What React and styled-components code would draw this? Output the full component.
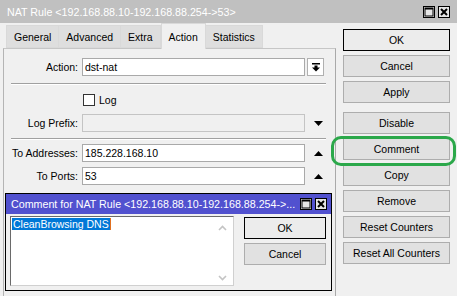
import React from "react";
import styled, { createGlobalStyle } from "styled-components";

const GlobalStyle = createGlobalStyle`
  html, body {
    margin: 0;
    padding: 0;
    background: #f0f0f0;
  }
  body {
    font-family: "Liberation Sans", Arial, sans-serif;
    font-size: 10.5px;
    color: #000;
  }
`;

const Window = styled.div`
  position: relative;
  width: 457px;
  height: 296px;
  overflow: hidden;
  background: #f0f0f0;
`;

const TitleBar = styled.div`
  height: ${(p) => (p.active ? "20px" : "23px")};
  display: flex;
  align-items: center;
  justify-content: space-between;
  padding: ${(p) => (p.active ? "0 4px 0 5px" : "0 7px")};
  background: ${(p) => (p.active ? "#5151cf" : "#c0c0c0")};
  color: #fff;
  font-size: 10.7px;
  box-sizing: border-box;
  white-space: nowrap;
`;

const TitleText = styled.span`
  overflow: hidden;
`;

const WinButtons = styled.div`
  display: flex;
  gap: 3px;
`;

const WinButton = styled.div`
  width: 12px;
  height: 12px;
  border: 1px solid #000;
  background: #e6e6e6;
  display: flex;
  align-items: center;
  justify-content: center;
  box-sizing: border-box;
`;

const Body = styled.div`
  display: flex;
  padding-left: 3px;
`;

const LeftPane = styled.div`
  width: 333px;
  display: flex;
  flex-direction: column;
`;

const TabRow = styled.div`
  display: flex;
  align-items: flex-end;
  height: 25px;
  padding-left: 3px;
  position: relative;
  z-index: 1;
`;

const Tab = styled.div`
  height: ${(p) => (p.selected ? "26px" : "23px")};
  margin-bottom: ${(p) => (p.selected ? "-1px" : "0")};
  padding: 0 7px;
  display: flex;
  align-items: center;
  box-sizing: border-box;
  border: 1px solid #d9d9d9;
  border-bottom: ${(p) => (p.selected ? "none" : "1px solid #d9d9d9")};
  border-left: ${(p) => (p.first || p.selected ? "1px solid #d9d9d9" : "none")};
  background: ${(p) => (p.selected ? "#f0f0f0" : "#dedede")};
  white-space: nowrap;
`;

const Panel = styled.div`
  height: 260px;
  border: 1px solid #c6c6c6;
  border-right-color: #a9a9a9;
  border-left-color: #b4b4b4;
  background: #f0f0f0;
  padding-top: 9px;
  box-sizing: border-box;
`;

const FormRow = styled.div`
  display: grid;
  grid-template-columns: 74px 223px 18px;
  column-gap: 4px;
  align-items: center;
  height: 18px;
  margin-top: ${(p) => p.mt || 0}px;
`;

const Label = styled.label`
  text-align: right;
  white-space: nowrap;
`;

const Input = styled.div`
  height: 18px;
  box-sizing: border-box;
  border: 1px solid ${(p) => (p.disabled ? "#c4c4c4" : "#a9a9a9")};
  background: ${(p) => (p.disabled ? "#f0f0f0" : "#fff")};
  padding: 0 2px;
  display: flex;
  align-items: center;
  white-space: nowrap;
`;

const SideBox = styled.div`
  height: 18px;
  width: 17px;
  margin-left: -2px;
  box-sizing: border-box;
  border: ${(p) => (p.boxed ? "1px solid #b0b0b0" : "none")};
  background: ${(p) => (p.boxed ? "#fff" : "transparent")};
  display: flex;
  align-items: center;
  justify-content: center;
  padding-left: ${(p) => (p.boxed ? "0" : "6px")};
`;

const Separator = styled.div`
  height: 0;
  margin: ${(p) => p.mt || 0}px 9px 0 7px;
  border-top: 1px solid #a0a0a0;
  border-bottom: 1px solid #fff;
`;

const CheckRow = styled.div`
  display: flex;
  align-items: center;
  gap: 4px;
  padding-left: 79px;
  margin-top: ${(p) => p.mt || 0}px;
  height: 13px;
`;

const CheckBox = styled.div`
  width: 12px;
  height: 12px;
  box-sizing: border-box;
  border: 1px solid #333;
  background: #fff;
`;

const ButtonColumn = styled.div`
  width: 107px;
  margin-left: 7px;
  padding-top: 6px;
  display: flex;
  flex-direction: column;
  gap: 4px;
`;

const Button = styled.div`
  height: 22px;
  box-sizing: border-box;
  border: 1px solid ${(p) => (p.primary ? "#000" : "#adadad")};
  background: ${(p) => (p.primary ? "#ececec" : "#e1e1e1")};
  display: flex;
  align-items: center;
  justify-content: center;
  white-space: nowrap;
  margin-top: ${(p) => p.mt || 0}px;
`;

const Highlight = styled.div`
  position: absolute;
  left: 331px;
  top: 136px;
  width: 125px;
  height: 30px;
  box-sizing: border-box;
  border: 3px solid #2ba84a;
  border-radius: 10px;
  pointer-events: none;
`;

const Dialog = styled.div`
  position: absolute;
  left: 5px;
  top: 193px;
  width: 327px;
  height: 98px;
  box-sizing: border-box;
  border: 1px solid #000;
  background: #f0f0f0;
  display: flex;
  flex-direction: column;
`;

const DialogBody = styled.div`
  display: flex;
  gap: 10px;
  padding: 2px 5px 0 4px;
`;

const TextArea = styled.div`
  position: relative;
  width: 224px;
  height: 70px;
  box-sizing: border-box;
  border: 1px solid #6a6a6a;
  border-right-color: #d0d0d0;
  border-bottom-color: #d0d0d0;
  background: #fff;
  padding: 1px;
`;

const Selected = styled.span`
  background: #0078d7;
  color: #fff;
  padding: 0 1px;
  line-height: 12px;
  display: inline-block;
`;

const Caret = styled.span`
  display: inline-block;
  width: 1px;
  height: 12px;
  background: #e07020;
  vertical-align: top;
`;

const ScrollArrow = styled.div`
  position: absolute;
  right: 6px;
  top: ${(p) => p.top}px;
  line-height: 0;
`;

const DialogButtons = styled.div`
  display: flex;
  flex-direction: column;
  gap: 4px;
  width: 82px;
  padding-top: 1px;
`;

const Chevron = ({ up }) => (
  <svg width="9" height="6" viewBox="0 0 9 6">
    <path
      d={up ? "M1 5 L4.5 1.5 L8 5" : "M1 1 L4.5 4.5 L8 1"}
      fill="none"
      stroke="#c4c4c4"
      strokeWidth="1.6"
    />
  </svg>
);

const Triangle = ({ up }) => (
  <svg width="9" height="5" viewBox="0 0 9 5">
    <polygon points={up ? "0,5 9,5 4.5,0" : "0,0 9,0 4.5,5"} fill="#000" />
  </svg>
);

const DropIcon = () => (
  <svg width="8" height="9" viewBox="0 0 8 9">
    <rect x="0" y="0" width="8" height="1.5" fill="#000" />
    <rect x="2.5" y="2.5" width="3" height="2.5" fill="#000" />
    <polygon points="0,4.5 8,4.5 4,8.5" fill="#000" />
  </svg>
);

const MaxIcon = () => (
  <svg width="10" height="10" viewBox="0 0 10 10">
    <rect x="1" y="1" width="8" height="8" fill="none" stroke="#000" strokeWidth="1" />
    <rect x="1" y="1" width="8" height="1.5" fill="#000" />
  </svg>
);

const CloseIcon = () => (
  <svg width="10" height="10" viewBox="0 0 10 10">
    <path d="M2 2 L8 8 M8 2 L2 8" stroke="#000" strokeWidth="2" />
  </svg>
);

const tabs = ["General", "Advanced", "Extra", "Action", "Statistics"];

const sideButtons = [
  { label: "OK", primary: true },
  { label: "Cancel" },
  { label: "Apply" },
  { label: "Disable", mt: 5 },
  { label: "Comment" },
  { label: "Copy" },
  { label: "Remove" },
  { label: "Reset Counters" },
  { label: "Reset All Counters" },
];

const App = () => {
  return (
    <Window>
      <GlobalStyle />
      <TitleBar>
        <TitleText>NAT Rule &lt;192.168.88.10-192.168.88.254-&gt;53&gt;</TitleText>
        <WinButtons>
          <WinButton><MaxIcon /></WinButton>
          <WinButton><CloseIcon /></WinButton>
        </WinButtons>
      </TitleBar>
      <Body>
        <LeftPane>
          <TabRow>
            {tabs.map((t, i) => (
              <Tab key={t} first={i === 0} selected={t === "Action"}>
                {t}
              </Tab>
            ))}
          </TabRow>
          <Panel>
            <FormRow>
              <Label>Action:</Label>
              <Input>dst-nat</Input>
              <SideBox boxed>
                <DropIcon />
              </SideBox>
            </FormRow>
            <Separator mt={7} />
            <CheckRow mt={8}>
              <CheckBox />
              <span>Log</span>
            </CheckRow>
            <FormRow mt={8}>
              <Label>Log Prefix:</Label>
              <Input disabled />
              <SideBox>
                <Triangle />
              </SideBox>
            </FormRow>
            <Separator mt={6} />
            <FormRow mt={4}>
              <Label>To Addresses:</Label>
              <Input>185.228.168.10</Input>
              <SideBox>
                <Triangle up />
              </SideBox>
            </FormRow>
            <FormRow mt={5}>
              <Label>To Ports:</Label>
              <Input>53</Input>
              <SideBox>
                <Triangle up />
              </SideBox>
            </FormRow>
          </Panel>
        </LeftPane>
        <ButtonColumn>
          {sideButtons.map((b) => (
            <Button key={b.label} primary={b.primary} mt={b.mt}>
              {b.label}
            </Button>
          ))}
        </ButtonColumn>
      </Body>
      <Highlight />
      <Dialog>
        <TitleBar active>
          <TitleText>Comment for NAT Rule &lt;192.168.88.10-192.168.88.254-&gt;...</TitleText>
          <WinButtons>
            <WinButton><MaxIcon /></WinButton>
            <WinButton><CloseIcon /></WinButton>
          </WinButtons>
        </TitleBar>
        <DialogBody>
          <TextArea>
            <Selected>CleanBrowsing DNS</Selected>
            <Caret />
            <ScrollArrow top={8}><Chevron up /></ScrollArrow>
            <ScrollArrow top={58}><Chevron /></ScrollArrow>
          </TextArea>
          <DialogButtons>
            <Button primary>OK</Button>
            <Button>Cancel</Button>
          </DialogButtons>
        </DialogBody>
      </Dialog>
    </Window>
  );
};

export default App;
